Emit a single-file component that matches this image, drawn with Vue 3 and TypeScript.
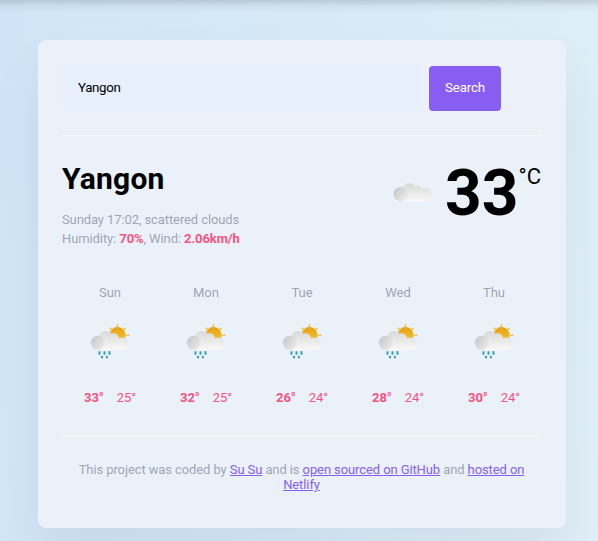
<script setup lang="ts">
interface Day {
  name: string
  max: number
  min: number
}

const days: Day[] = [
  { name: 'Sun', max: 33, min: 25 },
  { name: 'Mon', max: 32, min: 25 },
  { name: 'Tue', max: 26, min: 24 },
  { name: 'Wed', max: 28, min: 24 },
  { name: 'Thu', max: 30, min: 24 },
]
</script>

<template>
  <div class="page">
    <svg class="defs" width="0" height="0" aria-hidden="true">
      <defs>
        <linearGradient id="cloud" x1="0" y1="0" x2="0" y2="1">
          <stop offset="0" stop-color="#d9d9da" />
          <stop offset="1" stop-color="#f8f8f9" />
        </linearGradient>
        <linearGradient id="puff" x1="0" y1="0.15" x2="0.9" y2="0.85">
          <stop offset="0" stop-color="#c6c6c7" />
          <stop offset="1" stop-color="#ebebec" />
        </linearGradient>
        <linearGradient id="sun" x1="0" y1="0" x2="0" y2="1">
          <stop offset="0" stop-color="#e5a01c" />
          <stop offset="1" stop-color="#fbc91f" />
        </linearGradient>
      </defs>
    </svg>
    <main class="card">
      <form class="search" @submit.prevent>
        <input class="field" type="text" value="Yangon" />
        <button class="submit" type="submit">Search</button>
      </form>
      <section class="current">
        <div>
          <h1>Yangon</h1>
          <p class="details">
            Sunday 17:02, scattered clouds<br />
            Humidity: <strong>70%</strong>, Wind: <strong>2.06km/h</strong>
          </p>
        </div>
        <div class="temperature">
          <svg class="cloudy" width="40" height="22" viewBox="0 0 40 22">
            <path fill="url(#cloud)" d="M7.6 20.4A7.1 7.1 0 0 1 7.6 6.2L10 7A6.8 6.8 0 0 1 22.3 5.6 3.5 3.5 0 0 1 28.3 8.4 6.2 6.2 0 0 1 38.4 13.8 6.4 6.4 0 0 1 32 20.4Z" />
            <circle cx="7.6" cy="13.3" r="7.1" fill="url(#puff)" />
          </svg>
          <span class="value">33</span>
          <span class="unit">°C</span>
        </div>
      </section>
      <section class="forecast">
        <div v-for="day in days" :key="day.name" class="day">
          <div class="name">{{ day.name }}</div>
          <svg class="icon" width="42" height="38" viewBox="0 0 42 38">
            <g stroke="#f3b52b" stroke-width="1.4" stroke-linecap="round">
              <path d="M28.5 1.6v1.6M21.2 5.2l.9.9M36.1 5.4l-.9.8M38.2 12.4h1.4" />
            </g>
            <circle cx="28.5" cy="12.3" r="8.2" fill="url(#sun)" />
            <path fill="url(#cloud)" d="M9 26.9A7.1 7.1 0 0 1 9 12.7L10.2 12.6A7.6 7.6 0 0 1 23 10.8 5.2 5.2 0 0 1 30.2 15.3 6.2 6.2 0 0 1 34 14.5 6.2 6.2 0 0 1 33.8 26.9Z" />
            <circle cx="9" cy="19.8" r="7.1" fill="url(#puff)" />
            <path stroke="#3c9aca" stroke-width="2" d="M10.5 28.2v3.6M15.5 28.2v3.6M20.5 28.2v3.6M13 33v2.3M18 33v2.3" />
          </svg>
          <div class="range">
            <strong>{{ day.max }}°</strong><span>{{ day.min }}°</span>
          </div>
        </div>
      </section>
      <footer>
        This project was coded by <a href="#">Su Su</a> and is
        <a href="#">open sourced on GitHub</a> and <a href="#">hosted on Netlify</a>
      </footer>
    </main>
  </div>
</template>

<style>
body {
  margin: 0;
  overflow: hidden;
}
</style>

<style scoped>
.page {
  box-sizing: border-box;
  height: 541px;
  padding: 40px 32px 0 38px;
  overflow: hidden;
  font-family: Roboto, sans-serif;
  background:
    linear-gradient(rgba(80, 90, 100, 0.22), rgba(80, 90, 100, 0.06) 6px, transparent 13px),
    linear-gradient(100deg, #cfe5f7 0%, #d7e9f6 48%, #e1f0f8 100%);
}
.defs {
  display: block;
}
.card {
  box-sizing: border-box;
  width: 528px;
  height: 488px;
  padding: 24px;
  border-radius: 8px;
  background: #eaf1f9;
  box-shadow: 0 30px 50px rgba(65, 50, 100, 0.08);
}
.search {
  display: flex;
  align-items: flex-end;
  gap: 7px;
  height: 47px;
  padding-bottom: 24px;
  border-bottom: 1px solid #f6f8fc;
}
.field {
  box-sizing: border-box;
  width: 360px;
  height: 47px;
  padding: 0 16px 1px;
  border: 0;
  border-radius: 4px;
  background: #e8effd;
  color: #000;
  font: 13.333px Roboto, sans-serif;
  letter-spacing: -0.35px;
}
.submit {
  width: 72px;
  height: 45px;
  padding: 0 0 2px;
  border: 0;
  border-radius: 4px;
  background: #885df1;
  color: #fff;
  font: 13.333px Roboto, sans-serif;
  letter-spacing: -0.15px;
}
.current {
  display: flex;
  justify-content: space-between;
  height: 149px;
}
h1 {
  margin: 25px 0 0;
  font-size: 30px;
  line-height: 36px;
  font-weight: 700;
  letter-spacing: 0.2px;
}
.details {
  margin: 13px 0 0;
  color: rgba(39, 33, 66, 0.4);
  font-size: 13px;
  line-height: 19px;
  letter-spacing: -0.1px;
}
strong {
  color: #f65282;
  font-weight: 700;
}
.temperature {
  display: flex;
  align-items: flex-start;
  padding: 25px 1px 0 0;
}
.cloudy {
  margin: 20px 12px 0 0;
}
.value {
  padding-top: 1px;
  font-size: 64px;
  line-height: 64px;
  font-weight: 700;
}
.unit {
  padding-top: 3px;
  font-size: 22px;
  line-height: 26px;
}
.forecast {
  display: grid;
  grid-template-columns: repeat(5, 96px);
  height: 151px;
  border-bottom: 1px solid #f6f8fc;
}
.day {
  text-align: center;
  font-size: 13px;
  line-height: 15px;
}
.name {
  color: rgba(39, 33, 66, 0.4);
}
.icon {
  display: block;
  margin: 23px auto 29px;
}
.range {
  display: flex;
  justify-content: center;
  gap: 13px;
  color: #f65282;
  letter-spacing: -0.1px;
}
footer {
  padding: 25px 1px 0 0;
  text-align: center;
  color: rgba(39, 33, 66, 0.4);
  font-size: 13px;
  line-height: 15px;
  letter-spacing: -0.1px;
}
a {
  color: #885df1;
}
</style>
